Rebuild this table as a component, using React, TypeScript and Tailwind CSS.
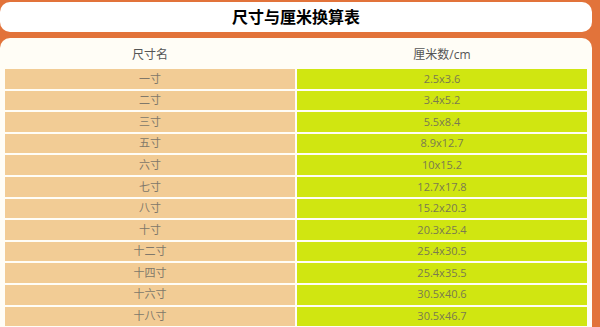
const rows: [string, string][] = [
  ["一寸", "2.5x3.6"],
  ["二寸", "3.4x5.2"],
  ["三寸", "5.5x8.4"],
  ["五寸", "8.9x12.7"],
  ["六寸", "10x15.2"],
  ["七寸", "12.7x17.8"],
  ["八寸", "15.2x20.3"],
  ["十寸", "20.3x25.4"],
  ["十二寸", "25.4x30.5"],
  ["十四寸", "25.4x35.5"],
  ["十六寸", "30.5x40.6"],
  ["十八寸", "30.5x46.7"],
];

const App = () => {
  return (
    <div
      className="w-[600px] h-[327px] overflow-hidden bg-[#e2733a] pt-[2px] pr-[8px]"
      style={{ fontFamily: '"Open Sans", "Noto Sans CJK SC", sans-serif' }}
    >
      {/* Title bar */}
      <div className="flex h-[30px] items-center justify-center rounded-[10px] bg-white text-[16px] font-bold text-black">
        尺寸与厘米换算表
      </div>

      {/* Table panel */}
      <div className="mt-[6px] h-[400px] rounded-t-[10px] bg-[#fffdf6] px-[5px] pt-[5px]">
        <div className="grid grid-cols-2 gap-[2px]">
          <div className="flex h-[24px] items-center justify-center text-[12px] text-[#555]">
            尺寸名
          </div>
          <div className="flex h-[24px] items-center justify-center text-[12px] text-[#555]">
            厘米数/cm
          </div>
          {rows.map(([name, cm]) => (
            <>
              <div
                key={name}
                className="flex h-[19.6px] items-center justify-center bg-[#f2cc95] text-[11px] text-[#80786a]"
              >
                {name}
              </div>
              <div
                key={cm + name}
                className="flex h-[19.6px] items-center justify-center bg-[#d0e611] text-[11px] text-[#7a7a50]"
              >
                {cm}
              </div>
            </>
          ))}
        </div>
      </div>
    </div>
  );
};

export default App;
